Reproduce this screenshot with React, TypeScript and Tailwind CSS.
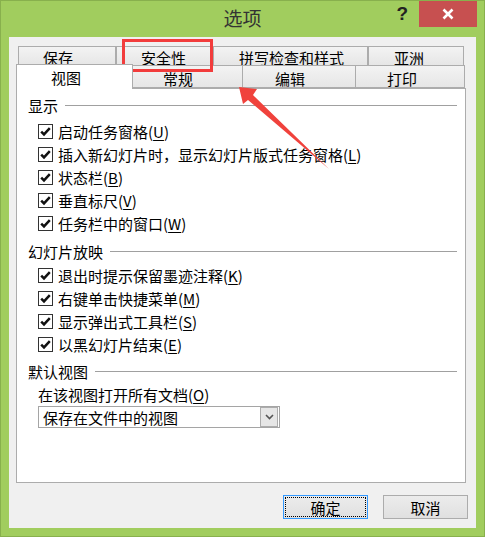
const FONT = { fontFamily: '"Noto Sans CJK SC", "Liberation Sans", sans-serif' };

const backTabs = [
  { label: "保存", w: "w-[98px]", pl: "pl-[24px]" },
  { label: "安全性", w: "w-[97px]", pl: "pl-[24px]" },
  { label: "拼写检查和样式", w: "w-[155px]", pl: "pl-[25px]" },
  { label: "亚洲", w: "w-[96px]", pl: "pl-[25px]" },
];

const frontTabs = [
  { label: "常规", w: "w-[110px]", pl: "pl-[30px]" },
  { label: "编辑", w: "w-[113px]", pl: "pl-[32px]" },
  { label: "打印", w: "w-[109px]", pl: "pl-[31px]" },
];

const showItems = [
  { text: "启动任务窗格", key: "U" },
  { text: "插入新幻灯片时，显示幻灯片版式任务窗格", key: "L" },
  { text: "状态栏", key: "B" },
  { text: "垂直标尺", key: "V" },
  { text: "任务栏中的窗口", key: "W" },
];

const slideItems = [
  { text: "退出时提示保留墨迹注释", key: "K" },
  { text: "右键单击快捷菜单", key: "M" },
  { text: "显示弹出式工具栏", key: "S" },
  { text: "以黑幻灯片结束", key: "E" },
];

function SectionHeader({ title, className = "" }: { title: string; className?: string }) {
  return (
    <div className={`flex items-center h-[23px] ${className}`}>
      <span className="leading-none">{title}</span>
      <div className="flex-1 h-px bg-[#a0a0a0] ml-[7px] mr-[8px]" />
    </div>
  );
}

function CheckRow({ text, k }: { text: string; k: string }) {
  return (
    <div className="flex items-center h-[23px] ml-[10px]">
      <span className="w-[15px] h-[15px] border border-[#333] bg-white flex items-center justify-center">
        <svg width="13" height="13" viewBox="0 0 13 13">
          <path d="M2.2 6.6 L5 9.4 L10.8 3.2" fill="none" stroke="#111" strokeWidth="2.5" />
        </svg>
      </span>
      <span className="ml-[5px] leading-none whitespace-nowrap">
        {text}(<u className="underline-offset-2">{k}</u>)
      </span>
    </div>
  );
}

export default function App() {
  return (
    <div
      style={FONT}
      className="relative w-[485px] h-[537px] bg-[#a1cd5e] shadow-[inset_0_0_0_1px_#88b04d] flex flex-col overflow-hidden text-[15px] text-black"
    >
      {/* title bar */}
      <div className="h-[37px] grid grid-cols-[1fr_auto_1fr]">
        <div />
        <div className="flex items-center pb-[1px] text-[19px] text-[#333]">选项</div>
        <div className="flex justify-end items-start">
          <span className="mt-[3px] mr-[11px] text-[19px] font-bold leading-[22px] text-[#222]" style={{ fontFamily: '"Liberation Sans", sans-serif' }}>
            ?
          </span>
          <div className="mt-[1px] mr-[8px] w-[58px] h-[26px] bg-[#c75050] flex items-center justify-center">
            <svg width="12" height="12" viewBox="0 0 12 12">
              <path d="M1.5 1.5 L10.5 10.5 M10.5 1.5 L1.5 10.5" stroke="#fff" strokeWidth="2.6" />
            </svg>
          </div>
        </div>
      </div>

      {/* client area */}
      <div className="mx-[9px] h-[491px] bg-[#f0f0f0] pl-[7px] pt-[9px] flex flex-col">
        <div className="flex h-[19px] ml-[2px]">
          {backTabs.map((t) => (
            <div
              key={t.label}
              className={`${t.w} ${t.pl} h-full border border-[#acacac] border-b-0 bg-linear-to-b from-[#f3f3f3] to-[#e6e6e6] flex items-center pt-[3px] leading-none`}
            >
              {t.label}
            </div>
          ))}
        </div>
        <div className="flex h-[23px] items-start">
          <div className="relative z-10 -mt-[1px] w-[117px] h-[25px] pl-[34px] bg-white border border-[#acacac] border-b-0 flex items-center leading-none">
            视图
          </div>
          {frontTabs.map((t) => (
            <div
              key={t.label}
              className={`${t.w} ${t.pl} h-[23px] border border-[#acacac] border-l-0 bg-linear-to-b from-[#f3f3f3] to-[#e6e6e6] flex items-center pt-[3px] leading-none`}
            >
              {t.label}
            </div>
          ))}
        </div>

        {/* panel */}
        <div className="w-[450px] h-[395px] border border-[#acacac] bg-white pl-[11px] pt-[5px] flex flex-col">
          <SectionHeader title="显示" className="mb-[3px]" />
          {showItems.map((it) => (
            <CheckRow key={it.key} text={it.text} k={it.key} />
          ))}
          <SectionHeader title="幻灯片放映" className="mt-[5px] mb-[1px]" />
          {slideItems.map((it) => (
            <CheckRow key={it.key} text={it.text} k={it.key} />
          ))}
          <SectionHeader title="默认视图" className="mt-[4px]" />
          <div className="h-[23px] ml-[10px] flex items-center leading-none">
            在该视图打开所有文档(<u className="underline-offset-2">O</u>)
          </div>
          <div className="ml-[10px] w-[242px] h-[22px] border border-[#a5a5a5] bg-white flex items-center">
            <span className="flex-1 pl-[4px] leading-none">保存在文件中的视图</span>
            <span className="w-[18px] h-[20px] mr-[1px] bg-[#e6e6e6] border border-[#acacac] flex items-center justify-center">
              <svg width="9" height="6" viewBox="0 0 9 6">
                <path d="M1 1 L4.5 4.5 L8 1" fill="none" stroke="#555" strokeWidth="1.6" />
              </svg>
            </span>
          </div>
        </div>

        {/* buttons */}
        <div className="flex justify-end gap-[15px] pr-[8px] mt-[12px]">
          <button className="w-[85px] h-[24px] border border-[#3399ff] bg-linear-to-b from-[#ececec] to-[#e0e0e0] outline-1 outline-dotted outline-black outline-offset-[-3px] leading-none">
            确定
          </button>
          <button className="w-[85px] h-[24px] border border-[#acacac] bg-linear-to-b from-[#ececec] to-[#e0e0e0] leading-none">
            取消
          </button>
        </div>
      </div>

      {/* annotations */}
      <div className="absolute left-[122px] top-[39px] w-[91px] h-[33px] border-[3px] border-[#f23c3c] pointer-events-none" />
      <svg className="absolute left-0 top-0 pointer-events-none" width="485" height="537">
        <polygon points="239,87 257,89 253,95 329,169 248,100 243,104" fill="#f0423c" />
      </svg>
    </div>
  );
}
